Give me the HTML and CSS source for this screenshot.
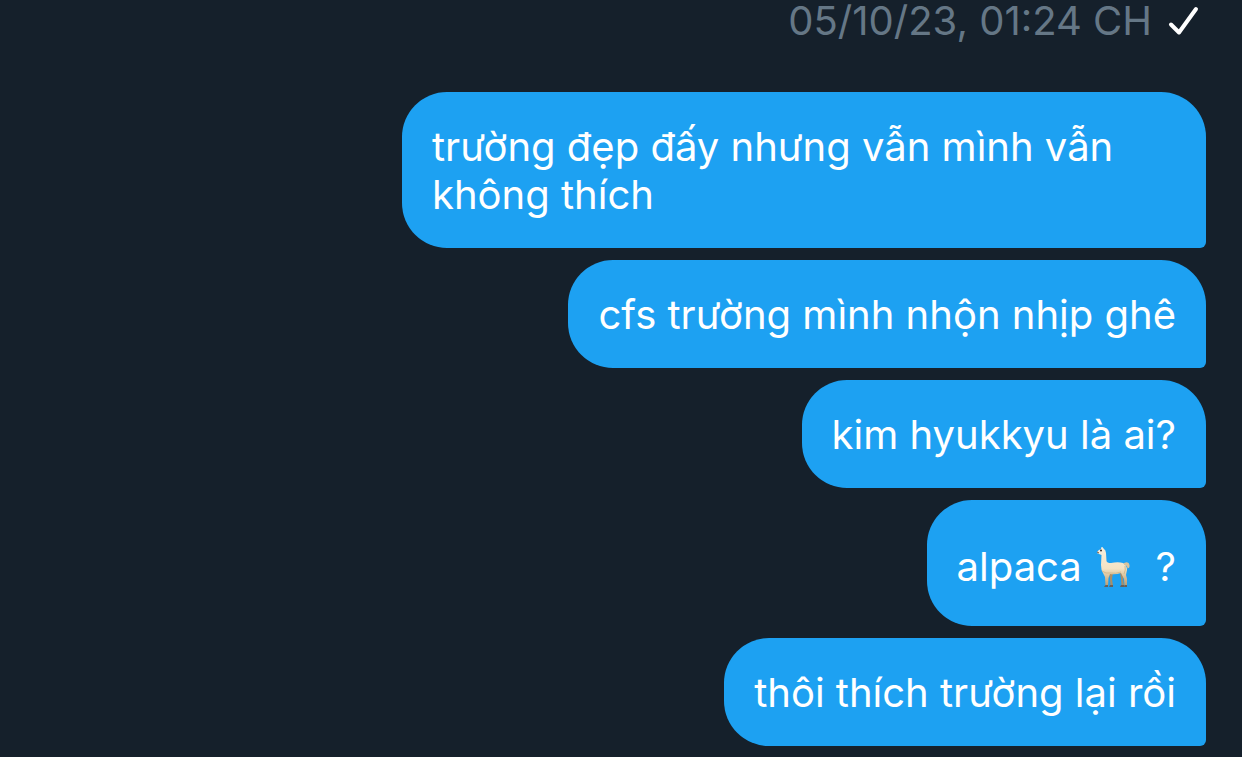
FILE: index.html
```html
<!DOCTYPE html>
<html lang="vi">
<head>
  <meta charset="UTF-8" />
  <meta name="viewport" content="width=device-width, initial-scale=1" />
  <title>Messages</title>
  <link rel="stylesheet" href="styles.css">
</head>
<body>

  <main class="chat">
    <div class="status">
      <time datetime="2023-10-05T13:24">05/10/23, 01:24 CH</time>
      <svg class="check" viewBox="0 0 32 32" aria-hidden="true">
        <path d="M3 19.5 L11 27.5 L28 4" />
      </svg>
    </div>

    <div class="messages">
      <p class="bubble">trường đẹp đấy nhưng vẫn mình vẫn không thích</p>
      <p class="bubble">cfs trường mình nhộn nhịp ghê</p>
      <p class="bubble">kim hyukkyu là ai?</p>
      <p class="bubble bubble-emoji">alpaca
        <svg class="alpaca" viewBox="0 0 40 42" role="img" aria-label="alpaca">
          <defs>
            <linearGradient id="fleece" x1="0" y1="0" x2="0" y2="1">
              <stop offset="0" stop-color="#f7eedf" />
              <stop offset="0.55" stop-color="#f3e3c4" />
              <stop offset="1" stop-color="#b99b70" />
            </linearGradient>
          </defs>
          <path class="far-leg" d="M16 27 H20 L19 33 L20 40 H17.500 L17 33 Z M27 26 H31 L30 32 L31 40 H28.500 L28 33 Z" />
          <path class="hoof" d="M17 39 H20 V41 H16 Z M28 39 H31 V41 H27 Z" />
          <path fill="url(#fleece)" d="M8 3 L8.500 1 Q10 0.500 10.500 2.500 Q13 4 13 7 L13.500 15 Q14 17 18 17 Q25 15.500 30 17 Q34 19 34 24 L33 29 L34 33 L34 40 H31.500 L31 33 L28 27 Q22 29 17 28 L15.500 32 L15 40 H12.500 L12 31 L10 27 Q8 24 8 19 L8.500 9 L6 8 L4 7 Q4 5 6 4 Z" />
          <path class="tail" d="M31 17 Q36 15 36.500 19 Q37 22 34.500 22.500 Q34.500 19 31 19 Z" />
          <path class="shade" d="M9 25 Q13 28 17 27 Q23 28 28 26 M32 20 Q33 24 31 28" />
          <path class="hoof" d="M12.500 39 H15 V41 H11 Z M31.500 39 H34 V41 H31 Z" />
          <circle class="eye" cx="8" cy="4.500" r="1" />
          <path class="mouth" d="M4 6 L6 7" />
        </svg>
        &nbsp;?</p>
      <p class="bubble">thôi thích trường lại rồi</p>
    </div>
  </main>

</body>
</html>
```

FILE: styles.css
```css
:root {
  --bg-color: #15202b;
  --bubble-color: #1da1f2;
  --muted-color: #657786;
}

body {
  background-color: var(--bg-color);
  color: #fff;
  font-family: Inter, "Noto Sans", sans-serif;
  font-size: 40px;
  line-height: 48px;
  margin: 0;
}

.chat {
  padding: 0 36px 11px;
}

.status {
  display: flex;
  justify-content: flex-end;
  align-items: center;
  gap: 16px;
  line-height: 42px;
  margin-bottom: 50px;
  padding-right: 6px;
  color: var(--muted-color);
}

.check {
  width: 32px;
  height: 32px;
  fill: none;
  stroke: #fff;
  stroke-width: 4;
  stroke-linecap: round;
  stroke-linejoin: round;
}

.messages {
  display: flex;
  flex-direction: column;
  align-items: flex-end;
  gap: 12px;
}

.bubble {
  box-sizing: border-box;
  max-width: 804px;
  margin: 0;
  padding: 31px 30px 29px;
  background: var(--bubble-color);
  border-radius: 45px 45px 6px 45px;
}

.bubble-emoji {
  padding: 43px 30px 35px;
}

/* Emoji */
.alpaca {
  width: 40px;
  height: 42px;
  vertical-align: -7px;
}

.far-leg {
  fill: #a98d68;
}

.tail {
  fill: #d9c49d;
}

.shade {
  fill: none;
  stroke: #d4ba8e;
  stroke-width: 1;
}

.hoof {
  fill: #66605a;
}

.eye {
  fill: #3b2c26;
}

.mouth {
  stroke: #6b5549;
  stroke-width: 1;
}
```
